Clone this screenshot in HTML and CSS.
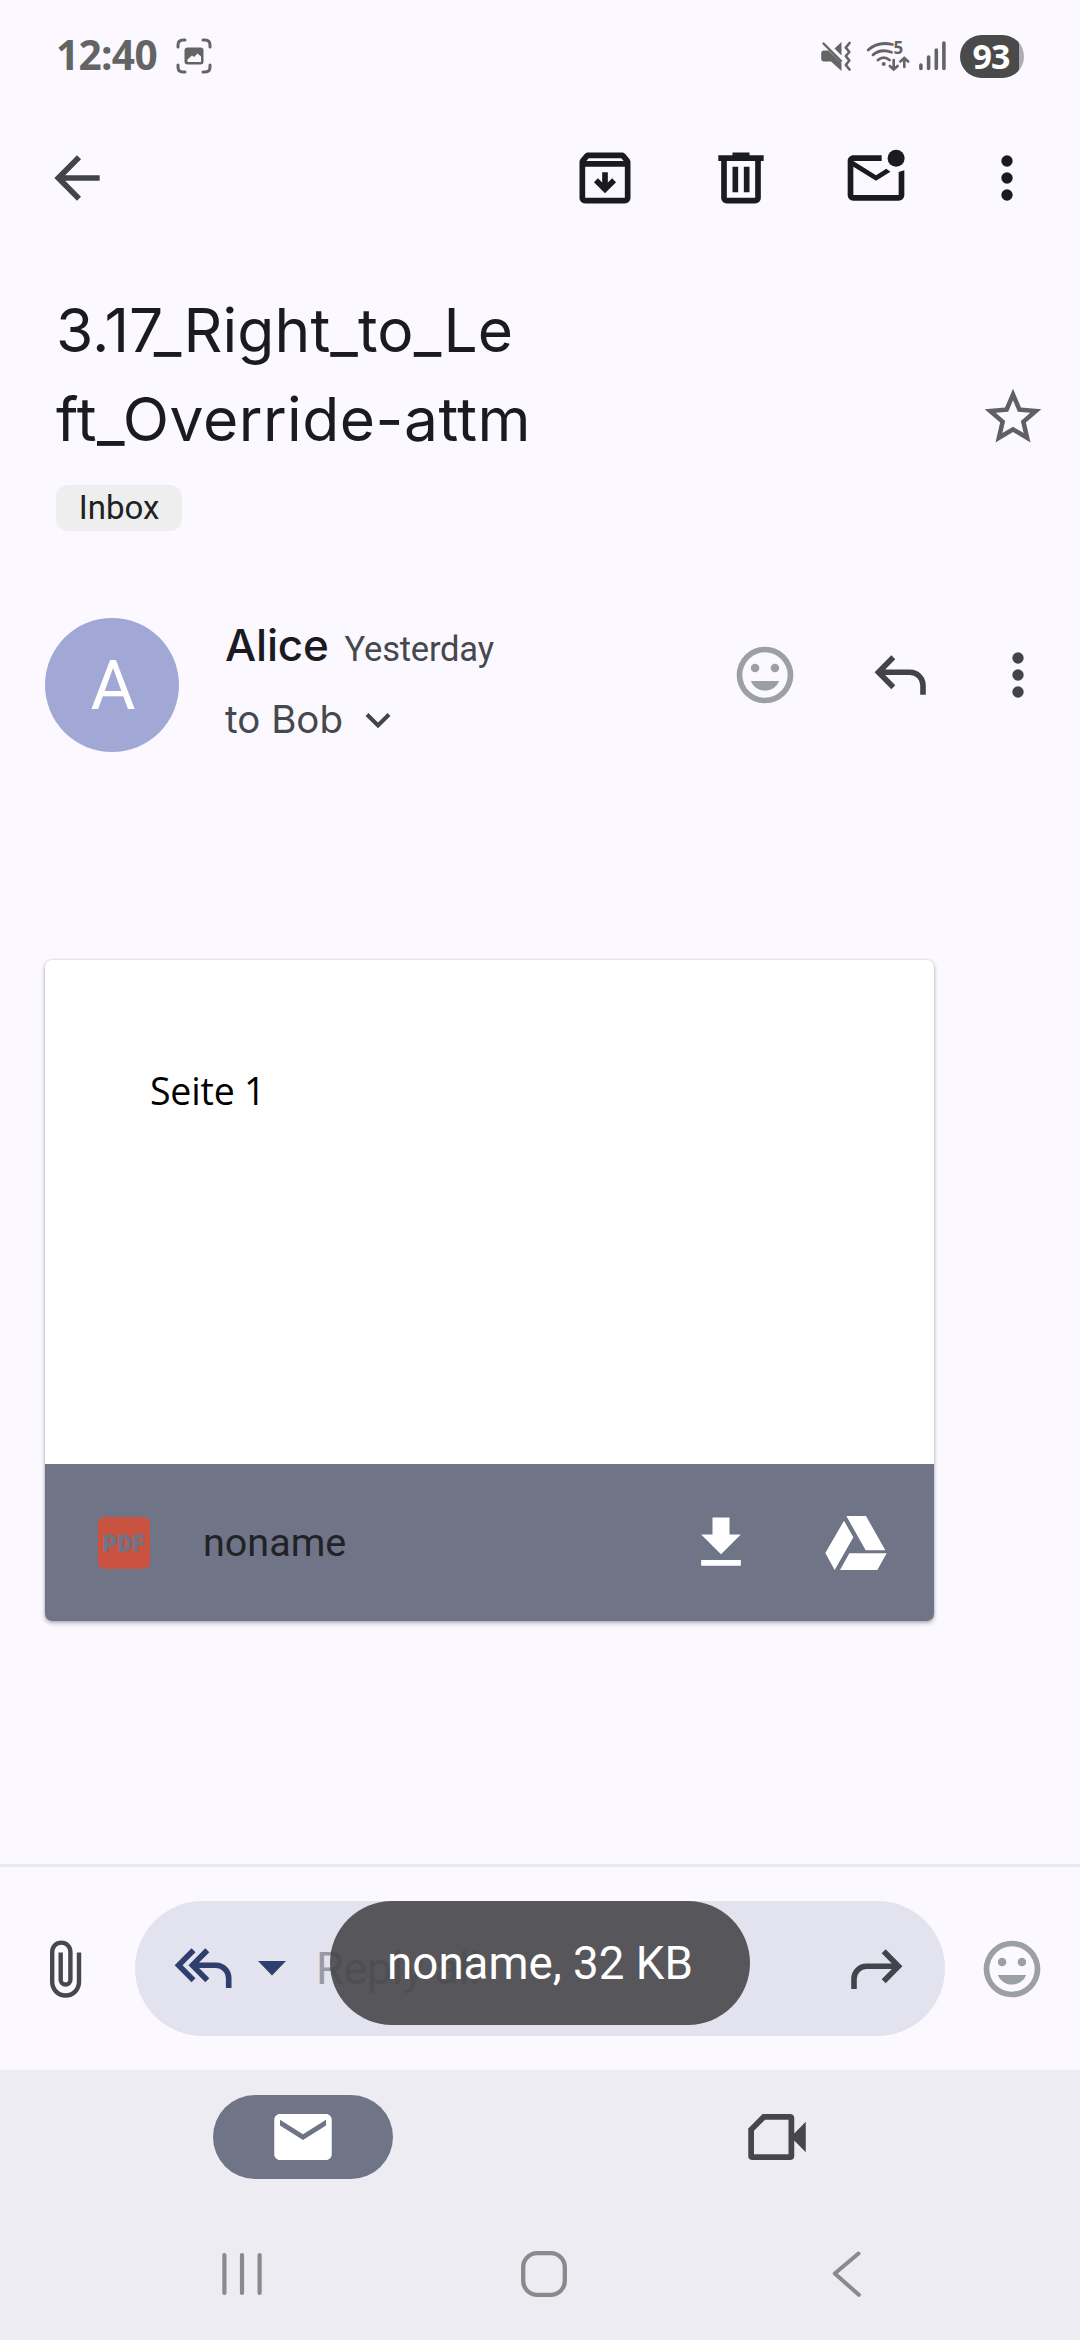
FILE: index.html
```html
<!DOCTYPE html>
<html lang="en">
<head>
<meta charset="utf-8">
<title>Mail</title>
<link rel="stylesheet" href="styles.css">
</head>
<body>
<div class="screen">
  <div class="status">
    <span class="clock">12:40</span>
    <svg class="shot" width="36" height="36" viewBox="0 0 36 36" fill="none" stroke="#646464" stroke-width="3" stroke-linecap="round">
      <path d="M2 9V7Q2 2 7 2H9M27 2H29Q34 2 34 7V9M34 27V29Q34 34 29 34H27M9 34H7Q2 34 2 29V27"/>
      <rect x="8.5" y="9.5" width="19" height="17" rx="3" fill="#646464" stroke="none"/>
      <path d="M11.500 24v-2.500l4.500-4 2 1.500 3.500-3.500 3.500 3v5.500z" fill="#fbf8ff" stroke="none"/>
    </svg>
    <svg class="mute" width="31" height="30" viewBox="821 41 31 30" fill="#646464">
      <path d="M841.500 42V55.500L834.500 48.500z"/>
      <path d="M824 50.500H828.500L841.500 63V71L831 61.500H824Q821.200 61.500 821.200 58.500V53.500Q821.200 50.500 824 50.500z"/>
      <path d="M823.500 43.500L841 61" stroke="#646464" stroke-width="2.400" stroke-linecap="round"/>
      <path d="M849.500 43L845.800 47.600 849.300 52 845.800 56 849.300 60.500 845.800 65 849.500 69.500" fill="none" stroke="#646464" stroke-width="2.600" stroke-linecap="round" stroke-linejoin="round"/>
    </svg>
    <svg class="wifi" width="44" height="32" viewBox="866 41 44 32" fill="none" stroke="#646464" stroke-width="2.800" stroke-linecap="round">
      <path d="M868.200 51Q878 42 892.500 45.500M873 55.800Q881 49.300 891.500 53.200M878 61Q883.700 56.300 889.500 61"/>
      <circle cx="883.700" cy="65" r="2" fill="#646464" stroke="none"/>
      <path d="M893.700 61V70M889.800 67L893.700 70.500 897.600 67M904.300 68V59.500M900.400 62.500L904.300 59 908.200 62.500" stroke-width="2.600"/>
      <text class="band" x="893.500" y="55.300">5</text>
    </svg>
    <svg class="signal" width="28" height="30" viewBox="919 41 28 30" stroke="#646464" stroke-width="3.600" stroke-linecap="round">
      <path d="M920.900 65V68.500M928.600 57V68.500M936.300 50V68.500M943.900 43V68.500"/>
    </svg>
    <span class="battery">93</span>
  </div>

  <div class="appbar">
    <svg class="i24" viewBox="0 0 24 24" fill="#41444a"><path d="M20 11H7.830l5.590-5.590L12 4l-8 8 8 8 1.410-1.410L7.830 13H20v-2z"/></svg>
    <svg class="i24 archive" viewBox="0 0 24 24" fill="#1a1b20"><path fill-rule="evenodd" d="M20.540 5.230l-1.390-1.680C18.880 3.210 18.470 3 18 3H6c-.47 0-.88.21-1.160.55L3.460 5.230C3.170 5.570 3 6.020 3 6.500V19c0 1.100.9 2 2 2h14c1.100 0 2-.9 2-2V6.500c0-.48-.17-.93-.46-1.270zM6.240 5h11.520l.83 1H5.420l.82-1zM5 19V8h14v11H5z"/><path d="M11 10v3.600l-1.500-1.500-1.400 1.400 3.900 3.900 3.900-3.900-1.400-1.400-1.500 1.500V10z"/></svg>
    <svg class="i24 trash" viewBox="0 0 24 24" fill="#1a1b20"><path d="M15 4V3H9v1H4v2h1v13c0 1.100.9 2 2 2h10c1.100 0 2-.9 2-2V6h1V4h-5zm2 15H7V6h10v13zM9 8h2v9H9zm4 0h2v9h-2z"/></svg>
    <svg class="i24 unread" viewBox="0 0 24 24" fill="#1a1b20"><path d="M22 9.300V18c0 1.100-.9 2-2 2H4c-1.100 0-2-.9-2-2V6c0-1.100.9-2 2-2h10v2H4l8 5 3.600-2.250 1.500 1L12 13 4 8v10h16V9.900z"/><circle cx="19.100" cy="5" r="3"/></svg>
    <svg class="i24 more" viewBox="0 0 24 24" fill="#1a1b20"><circle cx="12" cy="6" r="2"/><circle cx="12" cy="12" r="2"/><circle cx="12" cy="18" r="2"/></svg>
  </div>

  <div class="subject">
    <div>
      <h1>3.17_Right_to_Le<br><span class="wrap">ft_Override-attm</span></h1>
      <span class="chip">Inbox</span>
    </div>
    <svg class="i24 star" viewBox="0 0 24 24" fill="#5f5f65"><path d="M22 9.240l-7.190-.62L12 2 9.190 8.630 2 9.240l5.460 4.730L5.820 21 12 17.270 18.180 21l-1.630-7.030L22 9.240zM12 15.400l-3.760 2.270 1-4.280-3.320-2.880 4.380-.38L12 6.100l1.710 4.040 4.380.38-3.320 2.880 1 4.280L12 15.400z"/></svg>
  </div>

  <div class="sender">
    <div class="avatar">A</div>
    <div class="who">
      <div class="from"><span class="name">Alice</span><span class="date">Yesterday</span></div>
      <div class="to"><span>to Bob</span>
        <svg width="28" height="18" viewBox="0 0 28 18" fill="none" stroke="#41444a" stroke-width="4"><path d="M3 2.500L14 13.500 25 2.500"/></svg>
      </div>
    </div>
    <svg class="i24 smile" viewBox="0 0 24 24" fill="#9aa0a3"><path d="M12 2a10 10 0 1 0 0 20 10 10 0 0 0 0-20zm0 18a8 8 0 1 1 0-16 8 8 0 0 1 0 16z"/><circle cx="8.500" cy="9.500" r="1.500"/><circle cx="15.500" cy="9.500" r="1.500"/><path d="M7 14.100c.8 2 2.700 3.400 5 3.400s4.200-1.400 5-3.400z"/></svg>
    <svg class="reply" width="54" height="42" viewBox="873 654 54 42" fill="none" stroke="#41444a" stroke-width="5.600"><path d="M893.300 657.300L878.500 672.300 893.300 687.300M879 672.300H910A13 13 0 0 1 923 685.300V694.800"/></svg>
    <svg class="i24 kebab" viewBox="0 0 24 24" fill="#41444a"><circle cx="12" cy="6" r="2"/><circle cx="12" cy="12" r="2"/><circle cx="12" cy="18" r="2"/></svg>
  </div>

  <div class="card">
    <div class="preview">Seite 1</div>
    <div class="file">
      <span class="pdf">PDF</span>
      <span class="filename">noname</span>
      <svg class="i24 download" viewBox="0 0 24 24" fill="#fff"><path d="M19 9h-4V3H9v6H5l7 7 7-7zM5 18v2h14v-2H5z"/></svg>
      <svg class="drive" width="62" height="54" viewBox="675 253 186 162" fill="#fff"><path d="M732 267L760 317 704 415 676 364zM739 253H798L856 356H797zM748 365H860L832 415H720z"/></svg>
    </div>
  </div>

  <div class="replybar">
    <svg class="clip" width="32" height="58" viewBox="50 1939.500 32 58" fill="none" stroke="#45494d" stroke-width="4.400"><path d="M79 1952V1981.600A13.400 13.400 0 0 1 52.200 1981.600V1951.200A9.100 9.100 0 0 1 70.400 1951.200V1979.200A4.850 4.850 0 0 1 60.700 1979.200V1952"/></svg>
    <div class="field">
      <svg width="60" height="42" viewBox="174 1948 60 42" fill="none" stroke="#2e3f6e" stroke-width="5.600"><path d="M193.500 1950.300L178.600 1965.300 193.500 1980.300M207.300 1950.300L192.400 1965.300 207.300 1980.300M193 1965.300H216A12.700 12.700 0 0 1 228.700 1978V1988"/></svg>
      <svg class="caret" width="28" height="15" viewBox="0 0 28 15" fill="#2e3f6e"><path d="M0 0H28L14 14.500z"/></svg>
      <span class="hint">Reply all</span>
      <svg class="forward" width="54" height="42" viewBox="850 1948 54 42" fill="none" stroke="#41444a" stroke-width="5.600"><path d="M883.700 1951.300L898.500 1966.300 883.700 1981.300M898 1966.300H866.500A12.500 12.500 0 0 0 854 1978.800V1989"/></svg>
    </div>
    <svg class="i24 react" viewBox="0 0 24 24" fill="#9aa0a3"><path d="M12 2a10 10 0 1 0 0 20 10 10 0 0 0 0-20zm0 18a8 8 0 1 1 0-16 8 8 0 0 1 0 16z"/><circle cx="8.500" cy="9.500" r="1.500"/><circle cx="15.500" cy="9.500" r="1.500"/><path d="M7 14.100c.8 2 2.700 3.400 5 3.400s4.200-1.400 5-3.400z"/></svg>
    <div class="toast">noname, 32 KB</div>
  </div>

  <div class="tabs">
    <div class="tab"><svg width="58" height="46" viewBox="2 4 20 16" fill="#fff"><path d="M20 4H4c-1.100 0-2 .9-2 2v12c0 1.100.9 2 2 2h16c1.100 0 2-.9 2-2V6c0-1.100-.9-2-2-2zm0 4l-8 5-8-5V6l8 5 8-5v2z"/></svg></div>
    <svg class="meet" width="58" height="46" viewBox="0 0 20 16" fill="#45474d"><path fill-rule="evenodd" d="M5 0H14.500Q16 0 16 1.500V6.800L20 2.700V13.300L16 9.200V14.500Q16 16 14.500 16H1.500Q0 16 0 14.500V5zM5.850 2L2 5.850V14H14V2z"/></svg>
  </div>

  <div class="nav">
    <svg width="40" height="44" viewBox="0 0 40 44" stroke="#8a8a8c" stroke-width="4.200" stroke-linecap="round"><path d="M2.400 3V41M20 3V41M37.600 3V41"/></svg>
    <svg class="home" width="46" height="46" viewBox="0 0 46 46" fill="none" stroke="#8a8a8c" stroke-width="4.300"><rect x="2.200" y="2.200" width="41.600" height="41.600" rx="14"/></svg>
    <svg class="prev" width="29" height="46" viewBox="0 0 29 46" fill="none" stroke="#8a8a8c" stroke-width="4" stroke-linecap="round" stroke-linejoin="round"><path d="M26.500 2.500L2.800 22.500 26.800 43.800"/></svg>
  </div>
</div>
</body>
</html>
```
FILE: styles.css
```css
* { box-sizing: border-box; }
body { margin: 0; background: #fbf8ff; }
svg { display: block; flex: none; }
.screen { width: 1080px; height: 2340px; display: flex; flex-direction: column; overflow: hidden; font-family: Roboto, sans-serif; color: #1a1b20; }
.i24 { width: 68px; height: 68px; }

.status { height: 112px; display: flex; align-items: center; flex: none; }
.clock { margin-left: 56px; width: 102px; padding-bottom: 2px; font: 700 40.6px/56px "Open Sans", sans-serif; letter-spacing: -0.7px; color: #646464; white-space: nowrap; }
.shot { margin-left: 18px; }
.mute { margin-left: auto; }
.wifi { margin-left: 14px; overflow: visible; }
.band { font: 700 17px "Open Sans", sans-serif; fill: #646464; stroke: none; }
.signal { margin-left: 9px; }
.battery { margin: 0 56px 0 13px; width: 64px; height: 43px; border-radius: 22px; background: linear-gradient(90deg, #4a4a4b 59px, #aeabb2 59px); color: #fff; font: 700 34px/42px "Open Sans", sans-serif; letter-spacing: -1px; padding-left: 12.500px; }

.appbar { height: 132px; display: flex; align-items: center; flex: none; padding-left: 43px; }
.archive { margin-left: 460px; }
.trash { margin-left: 68px; }
.unread { margin-left: 67px; }
.more { margin-left: 63px; }

.subject { display: flex; justify-content: space-between; padding: 42px 33px 0 55px; flex: none; }
h1 { margin: 0 0 21px 1px; font: 400 60.5px/89px Inter, sans-serif; letter-spacing: 0.1px; }
.wrap { letter-spacing: 0.5px; }
.chip { display: block; margin-left: 1px; width: 126px; height: 46px; border-radius: 12px; background: #eee; font-size: 33px; line-height: 45px; text-align: center; color: #202124; }
.star { margin-top: 97px; }

.sender { display: flex; height: 134px; margin-top: 87px; flex: none; }
.avatar { margin-left: 45px; width: 134px; height: 134px; border-radius: 50%; background: #a1a8d6; color: #fff; font-size: 69px; line-height: 136px; text-align: center; padding-left: 2px; }
.who { margin: -3px 0 0 46px; width: 300px; }
.from { display: flex; align-items: baseline; gap: 16px; height: 79px; line-height: 60px; }
.name { font: 500 44px/60px Inter, sans-serif; letter-spacing: -0.2px; }
.date { font-size: 34.500px; letter-spacing: -0.2px; color: #45484d; }
.to { display: flex; align-items: center; gap: 21px; font: 400 38.500px/50px Inter, sans-serif; letter-spacing: 0; color: #45484d; }
.to svg { margin-top: 4px; }
.smile { margin: 23px 0 0 206px; }
.reply { margin: 36px 0 0 74px; }
.kebab { margin: 23px 0 0 57px; }

.card { margin: 208px 0 0 45px; width: 889px; height: 661px; flex: none; border-radius: 7px; overflow: hidden; background: #fff; box-shadow: 0 2px 4px rgba(60, 60, 80, .4), 0 0 2px rgba(60, 60, 80, .2); }
.preview { height: 504px; padding: 106px 0 0 105px; font: 400 37.500px/50px "Open Sans", sans-serif; letter-spacing: -0.2px; color: #000; }
.file { height: 157px; display: flex; align-items: center; background: #6f7486; }
.pdf { margin-left: 53px; width: 52px; height: 52px; border-radius: 6px; background: #c95340; color: #6f7486; font: 900 21.500px/53px Roboto, sans-serif; letter-spacing: .8px; text-align: center; -webkit-text-stroke: .8px #6f7486; }
.filename { margin-left: 53px; width: 300px; padding-top: 1px; font-size: 39.500px; line-height: 50px; letter-spacing: 0; color: #202226; }
.download { margin-left: 184px; }
.drive { margin-left: 70px; }

.replybar { position: relative; margin-top: 243px; height: 206px; flex: none; display: flex; align-items: center; border-top: 3px solid #e8eaed; }
.clip { margin-left: 50px; }
.field { margin-left: 53px; width: 810px; height: 135px; border-radius: 68px; background: #e3e3ef; display: flex; align-items: center; padding-left: 39px; }
.caret { margin-left: 24px; }
.hint { margin-left: 30px; font-size: 45px; letter-spacing: -0.3px; color: #9a99a3; }
.forward { margin-left: auto; margin-right: 41px; }
.react { margin-left: 33px; }
.toast { position: absolute; left: 330px; top: 34px; width: 420px; height: 124px; border-radius: 62px; background: rgba(71, 70, 73, .9); color: #fff; font-size: 45.700px; line-height: 126px; letter-spacing: 0; text-align: center; }

.tabs { height: 134px; flex: none; background: #edecf2; display: flex; align-items: center; padding-left: 213px; }
.tab { width: 180px; height: 84px; border-radius: 42px; background: #6f7486; display: flex; align-items: center; justify-content: center; }
.meet { margin-left: 355px; }
.nav { height: 136px; flex: none; background: #edecf2; display: flex; align-items: center; padding: 4px 0 0 222px; }
.home { margin-left: 259px; }
.prev { margin-left: 265px; }
```
